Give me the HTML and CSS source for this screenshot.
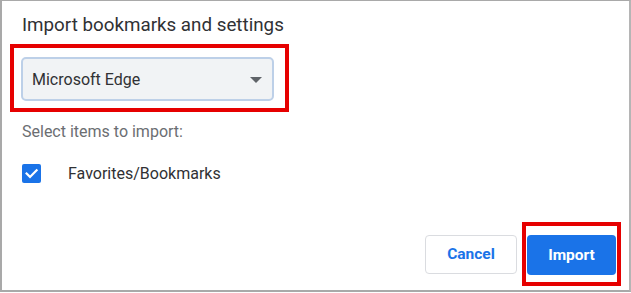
FILE: index.html
```html
<!DOCTYPE html>
<html>
<head>
<meta charset="utf-8">
<link rel="stylesheet" href="styles.css">
</head>
<body>
<div class="frame">
  <h1 class="title">Import bookmarks and settings</h1>
  <div class="mark mark-select">
    <div class="select">
      <span class="select-text">Microsoft Edge</span>
      <span class="caret"></span>
    </div>
  </div>
  <p class="hint">Select items to import:</p>
  <div class="check-row">
    <span class="checkbox">
      <svg width="19" height="19" viewBox="0 0 19 19"><path d="M4.6 9.6 L8 12.9 L14.6 6.2" fill="none" stroke="#fff" stroke-width="2.2" stroke-linecap="square"/></svg>
    </span>
    <span class="check-label">Favorites/Bookmarks</span>
  </div>
  <div class="actions">
    <button class="btn btn-cancel">Cancel</button>
    <div class="mark mark-btn">
      <button class="btn btn-primary">Import</button>
    </div>
  </div>
</div>
</body>
</html>
```

FILE: styles.css
```css
html, body {
  margin: 0;
  padding: 0;
  background: #fff;
}
.frame {
  box-sizing: border-box;
  width: 631px;
  height: 292px;
  border-style: solid;
  border-color: #a9a9a9;
  border-width: 1px 1px 2px 2px;
  border-right: 2px solid #b5b5b5;
  display: flex;
  flex-direction: column;
  font-family: Roboto, "Liberation Sans", sans-serif;
  color: #202124;
}
.title {
  margin: 12px 0 0 20px;
  font-size: 18.8px;
  line-height: 24px;
  font-weight: 400;
  color: #303134;
}
.mark {
  border: 4px solid #e60000;
  box-sizing: border-box;
}
.mark-select {
  margin: 7px 0 0 8px;
  width: 279px;
  height: 68px;
  padding: 9px 0 0 7px;
}
.select {
  box-sizing: border-box;
  width: 253px;
  height: 44px;
  background: #f1f3f5;
  border: 2px solid #bdd0e8;
  border-radius: 5px;
  display: flex;
  align-items: center;
  justify-content: space-between;
  padding: 0 10px 0 9px;
}
.select-text {
  font-size: 16px;
  color: #303134;
}
.caret {
  width: 0;
  height: 0;
  border-left: 6px solid transparent;
  border-right: 6px solid transparent;
  border-top: 6px solid #5f6368;
  margin-top: 1px;
}
.hint {
  margin: 10px 0 0 20px;
  font-size: 16px;
  line-height: 20px;
  color: #6b6e72;
}
.check-row {
  margin: 22px 0 0 20px;
  display: flex;
  align-items: center;
  height: 19px;
}
.checkbox {
  width: 19px;
  height: 19px;
  background: #1a73e8;
  border-radius: 2px;
  display: flex;
}
.check-label {
  margin-left: 27px;
  font-size: 16px;
  line-height: 20px;
  color: #303134;
}
.actions {
  margin: 39px 8px 0 0;
  display: flex;
  justify-content: flex-end;
  align-items: center;
  gap: 5px;
}
.btn {
  font-family: Roboto, "Liberation Sans", sans-serif;
  font-size: 15.5px;
  font-weight: 700;
  border-radius: 4px;
  height: 39px;
  box-sizing: border-box;
  cursor: pointer;
}
.btn-cancel {
  width: 92px;
  background: #fff;
  border: 1px solid #dadce0;
  color: #1a73e8;
}
.mark-btn {
  width: 99px;
  height: 64px;
  padding: 9px 1px 0 1px;
}
.btn-primary {
  width: 89px;
  height: 40px;
  background: #1a73e8;
  border: none;
  color: #fff;
}
```
